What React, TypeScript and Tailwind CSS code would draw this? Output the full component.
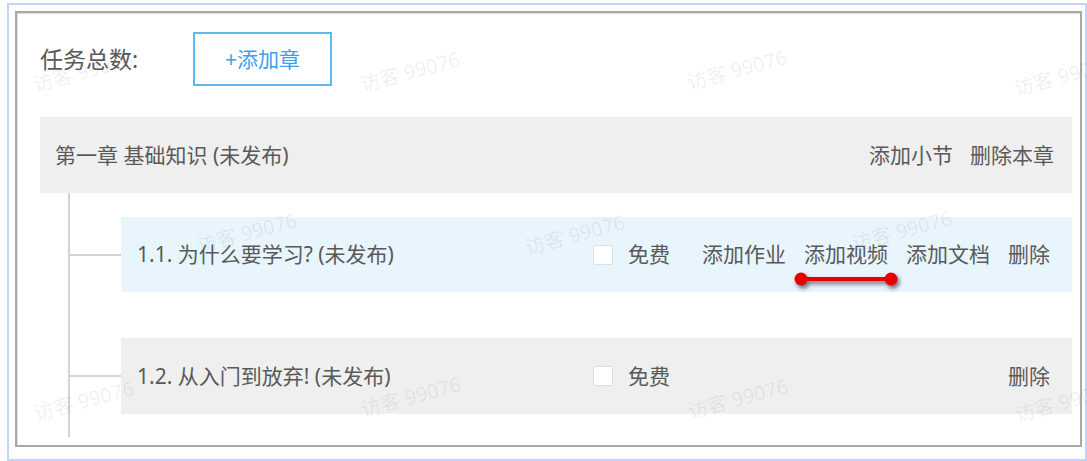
import React from "react";

const marks = [
  "left-[83px] top-[72px]",
  "left-[410px] top-[72px]",
  "left-[737px] top-[70px]",
  "left-[1064px] top-[76px]",
  "left-[247px] top-[233px]",
  "left-[575px] top-[235px]",
  "left-[902px] top-[231px]",
  "left-[84px] top-[401px]",
  "left-[411px] top-[397px]",
  "left-[738px] top-[399px]",
  "left-[1065px] top-[402px]",
];

function Section({
  title,
  actions,
  tinted,
  tall,
}: {
  title: string;
  actions: string[];
  tinted?: boolean;
  tall?: boolean;
}) {
  return (
    <div className="flex items-center">
      <div className="w-[51px] h-[2px] bg-[#d4d4d4]" />
      <div
        className={`flex-1 flex items-center text-[21px] ${tall ? "h-[76px]" : "h-[75px]"} ${
          tinted ? "bg-[#e8f5fd]" : "bg-[#efefef]"
        }`}
      >
        <div className="w-[472px] pl-4 whitespace-nowrap">{title}</div>
        <span className="w-5 h-5 bg-white border border-[#dcdfe6] rounded-[2px]" />
        <span className="ml-[15px]">免费</span>
        <div className="flex-1 flex justify-end gap-[18px] pr-[22px]">
          {actions.map((a) => (
            <span key={a} className="cursor-pointer whitespace-nowrap">
              {a}
            </span>
          ))}
        </div>
      </div>
    </div>
  );
}

export default function App() {
  return (
    <div className="relative w-[1087px] h-[461px] overflow-hidden bg-white pt-[3px] pl-[7px] font-['Noto_Sans','Noto_Sans_CJK_SC',sans-serif] text-[#595959] leading-none">
      <div className="w-[1080px] h-[458px] border-2 border-[#c4d3f6] pt-[6px] pl-[6px]">
        <div className="w-[1067px] h-[436px] border-2 border-[#a9a9a9] shadow-[inset_1px_1px_0_#dedede] pt-[19px] pl-[23px] pr-[8px]">
          <div className="flex items-center h-[54px]">
            <div className="w-[153px] text-[23px]">任务总数:</div>
            <button className="w-[139px] h-[54px] border-2 border-[#5db7f2] text-[#3c9ff0] text-[21px] bg-white">
              +添加章
            </button>
          </div>

          <div className="mt-[31px] h-[76px] bg-[#efefef] flex items-center pl-[15px] pr-[18px] text-[21px]">
            <span>第一章 基础知识 (未发布)</span>
            <div className="ml-auto flex gap-[17px]">
              <span>添加小节</span>
              <span>删除本章</span>
            </div>
          </div>

          <div className="ml-[28px] border-l-2 border-[#d4d4d4] pt-[24px] pb-[23px] flex flex-col gap-[46px]">
            <Section
              title="1.1. 为什么要学习? (未发布)"
              actions={["添加作业", "添加视频", "添加文档", "删除"]}
              tinted
            />
            <Section title="1.2. 从入门到放弃! (未发布)" actions={["删除"]} tall />
          </div>
        </div>
      </div>

      {marks.map((m) => (
        <span
          key={m}
          className={`absolute ${m} -translate-x-1/2 -translate-y-1/2 -rotate-[15deg] text-[20px] text-black/[0.07] whitespace-nowrap pointer-events-none`}
        >
          访客 99076
        </span>
      ))}

      <svg
        className="absolute left-[790px] top-[268px] drop-shadow-[2px_3px_2px_rgba(0,0,0,0.55)]"
        width="114"
        height="24"
        viewBox="0 0 114 24"
      >
        <line x1="11" y1="11" x2="101" y2="11" stroke="#e60000" strokeWidth="4" />
        <circle cx="11" cy="11" r="6.5" fill="#e60000" />
        <circle cx="101" cy="11" r="6.5" fill="#e60000" />
      </svg>
    </div>
  );
}
